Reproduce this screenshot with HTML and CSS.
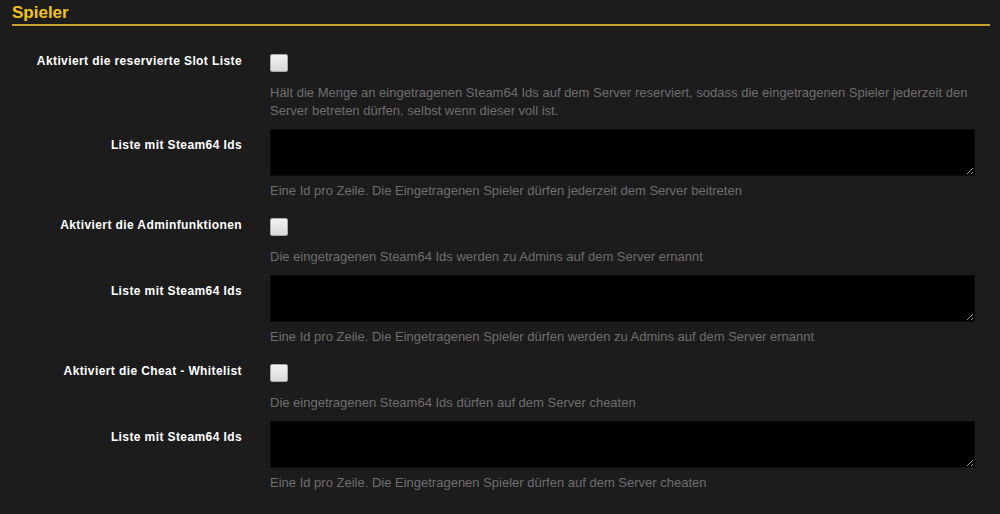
FILE: index.html
```html
<!DOCTYPE html>
<html lang="de">
<head>
<meta charset="utf-8">
<title>Spieler</title>
<link rel="stylesheet" href="styles.css">
</head>
<body>
<div class="panel">
  <h2 class="title">Spieler</h2>
  <form class="form">
    <div class="row check">
      <label class="label label-check">Aktiviert die reservierte Slot Liste</label>
      <div class="control">
        <input type="checkbox" class="box">
        <p class="help help-check">Hält die Menge an eingetragenen Steam64 Ids auf dem Server reserviert, sodass die eingetragenen Spieler jederzeit den Server betreten dürfen, selbst wenn dieser voll ist.</p>
      </div>
    </div>
    <div class="row text">
      <label class="label label-text">Liste mit Steam64 Ids</label>
      <div class="control">
        <textarea class="area"></textarea>
        <p class="help help-text">Eine Id pro Zeile. Die Eingetragenen Spieler dürfen jederzeit dem Server beitreten</p>
      </div>
    </div>
    <div class="row check">
      <label class="label label-check">Aktiviert die Adminfunktionen</label>
      <div class="control">
        <input type="checkbox" class="box">
        <p class="help help-check">Die eingetragenen Steam64 Ids werden zu Admins auf dem Server ernannt</p>
      </div>
    </div>
    <div class="row text">
      <label class="label label-text">Liste mit Steam64 Ids</label>
      <div class="control">
        <textarea class="area"></textarea>
        <p class="help help-text">Eine Id pro Zeile. Die Eingetragenen Spieler dürfen werden zu Admins auf dem Server ernannt</p>
      </div>
    </div>
    <div class="row check">
      <label class="label label-check">Aktiviert die Cheat - Whitelist</label>
      <div class="control">
        <input type="checkbox" class="box">
        <p class="help help-check">Die eingetragenen Steam64 Ids dürfen auf dem Server cheaten</p>
      </div>
    </div>
    <div class="row text">
      <label class="label label-text">Liste mit Steam64 Ids</label>
      <div class="control">
        <textarea class="area"></textarea>
        <p class="help help-text">Eine Id pro Zeile. Die Eingetragenen Spieler dürfen auf dem Server cheaten</p>
      </div>
    </div>
  </form>
</div>
</body>
</html>
```

FILE: styles.css
```css
html, body {
  margin: 0;
  padding: 0;
  background: #1c1c1c;
  font-family: "Liberation Sans", Arial, sans-serif;
}

.panel {
  padding: 0 10px 0 12px;
}

.title {
  margin: 0;
  padding: 3px 0 1px 0;
  font-size: 17px;
  line-height: 20px;
  font-weight: bold;
  color: #f2c21b;
  border-bottom: 2px solid #c9a42c;
}

.form {
  margin-top: 23px;
  padding-right: 15px;
}

.row {
  display: grid;
  grid-template-columns: 230px 1fr;
  column-gap: 28px;
}

.row.check {
  margin-bottom: 9px;
}

.row.text {
  margin-bottom: 13px;
}

.label {
  text-align: right;
  color: #ffffff;
  font-weight: bold;
  font-size: 12px;
  line-height: 18px;
  letter-spacing: 0.4px;
}

.label-check {
  padding-top: 3px;
}

.label-text {
  padding-top: 7px;
}

.control {
  display: flex;
  flex-direction: column;
  align-items: flex-start;
}

.box {
  appearance: none;
  -webkit-appearance: none;
  margin: 5px 0 0 0;
  width: 18px;
  height: 18px;
  box-sizing: border-box;
  border: 1px solid #a8a8a8;
  border-radius: 2px;
  background: linear-gradient(#f2f2f2, #d9d9d9);
}

.help {
  margin: 0;
  color: #6e6e6e;
  font-size: 13px;
  line-height: 18px;
}

.help-check {
  margin-top: 12px;
}

.help-text {
  margin-top: 6px;
}

.area {
  display: block;
  width: 100%;
  height: 47px;
  box-sizing: border-box;
  margin: 0;
  background: #000000;
  border: 1px solid #0c0c0c;
  color: #cccccc;
  resize: vertical;
}
```
